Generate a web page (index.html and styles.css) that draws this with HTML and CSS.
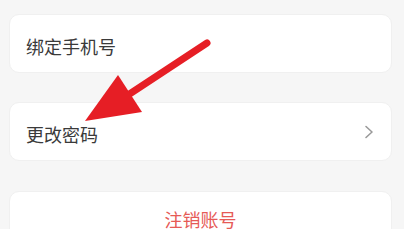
FILE: index.html
```html
<!DOCTYPE html>
<html lang="zh-CN">

<head>
    <meta charset="UTF-8">
    <meta name="viewport" content="width=device-width, initial-scale=1.0">
    <title>账号与安全</title>
    <link rel="stylesheet" href="styles.css">
</head>

<body>
    <div class="page">
        <!-- Settings list -->
        <div class="card">
            <span class="label">绑定手机号</span>
        </div>

        <div class="card">
            <span class="label">更改密码</span>
            <svg class="chevron" width="10" height="14" viewBox="0 0 10 14">
                <path d="M2 1.5 L8 7 L2 12.5" fill="none" stroke="#9a9a9a" stroke-width="1.6" stroke-linecap="round" stroke-linejoin="round" />
            </svg>
        </div>

        <div class="card card-danger">
            <span class="label danger">注销账号</span>
        </div>

        <!-- Red pointer drawn over the list -->
        <svg class="pointer" width="404" height="229" viewBox="0 0 404 229">
            <line x1="207" y1="43" x2="128" y2="95" stroke="#e61e25" stroke-width="7" stroke-linecap="round" />
            <polygon points="85,121 118,75 142,112" fill="#e61e25" />
        </svg>
    </div>
</body>

</html>
```

FILE: styles.css
```css
* {
    margin: 0;
    padding: 0;
    box-sizing: border-box;
}

body {
    background: #f6f6f6;
    font-family: "Noto Sans CJK SC", "Noto Sans", sans-serif;
    overflow: hidden;
}

.page {
    position: relative;
    height: 229px;
    overflow: hidden;
    padding: 14px 12px 0 9px;
    display: flex;
    flex-direction: column;
    gap: 29px;
}

/* Settings cards */
.card {
    flex-shrink: 0;
    height: 59px;
    background: #fff;
    border-radius: 10px;
    border: 1px solid #f0f0f0;
    display: flex;
    align-items: center;
    justify-content: space-between;
    padding: 5px 16px 0 16px;
}

.card-danger {
    margin-top: 1px;
    justify-content: center;
    align-items: flex-start;
    padding-top: 14px;
}

.label {
    font-size: 18px;
    color: #3a3a3a;
}

.danger {
    color: #e65a56;
}

.chevron {
    margin-right: 1px;
    margin-top: -4px;
}

.pointer {
    position: absolute;
    top: 0;
    left: 0;
    pointer-events: none;
}
```
